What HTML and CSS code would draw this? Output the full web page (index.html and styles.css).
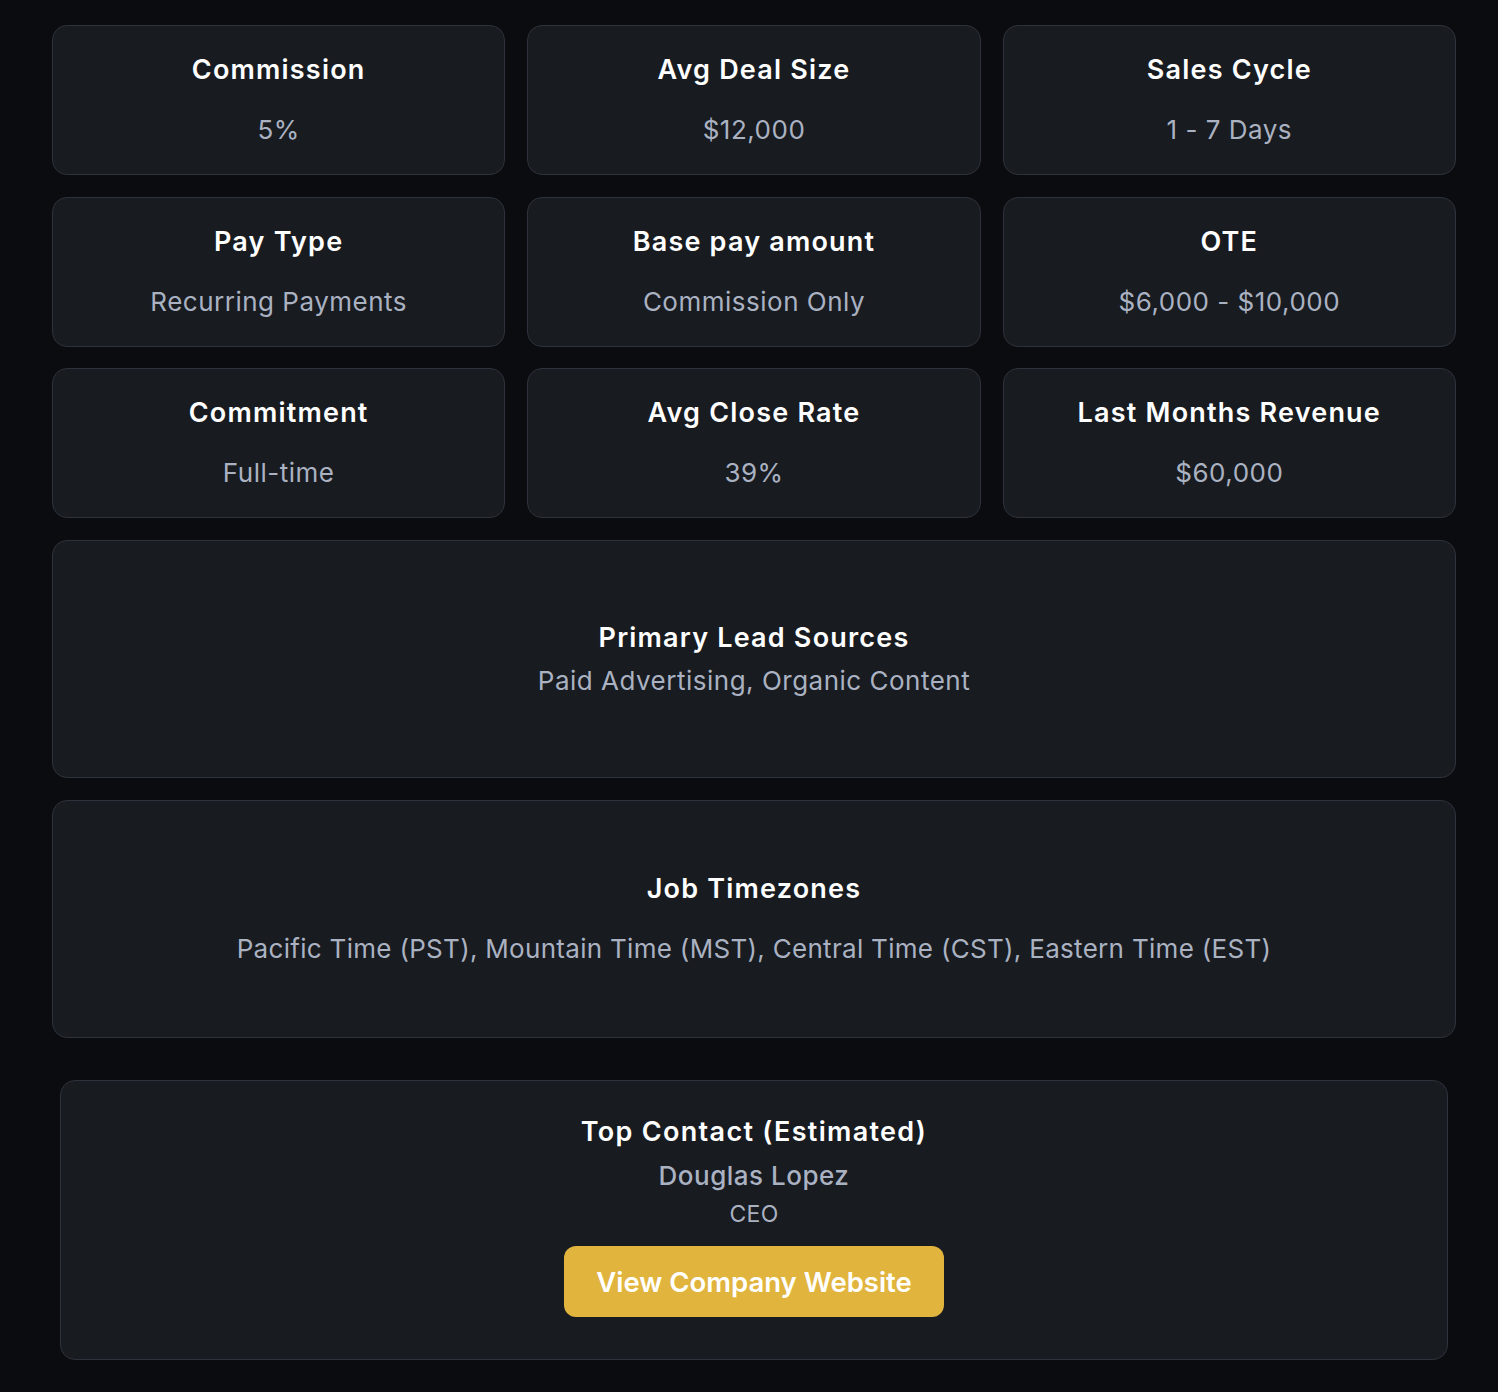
FILE: index.html
```html
<!DOCTYPE html>
<html lang="en">
<head>
<meta charset="utf-8">
<title>Job Details</title>
<link rel="stylesheet" href="styles.css">
</head>
<body>
<main class="page">
  <section class="stats">
    <div class="card stat"><h3 class="title">Commission</h3><p class="value">5%</p></div>
    <div class="card stat"><h3 class="title">Avg Deal Size</h3><p class="value">$12,000</p></div>
    <div class="card stat"><h3 class="title">Sales Cycle</h3><p class="value">1 - 7 Days</p></div>
    <div class="card stat"><h3 class="title">Pay Type</h3><p class="value">Recurring Payments</p></div>
    <div class="card stat"><h3 class="title">Base pay amount</h3><p class="value">Commission Only</p></div>
    <div class="card stat"><h3 class="title">OTE</h3><p class="value">$6,000 - $10,000</p></div>
    <div class="card stat"><h3 class="title">Commitment</h3><p class="value">Full-time</p></div>
    <div class="card stat"><h3 class="title">Avg Close Rate</h3><p class="value">39%</p></div>
    <div class="card stat"><h3 class="title">Last Months Revenue</h3><p class="value">$60,000</p></div>
  </section>
  <section class="card wide leads">
    <h3 class="title">Primary Lead Sources</h3>
    <p class="value">Paid Advertising, Organic Content</p>
  </section>
  <section class="card wide zones">
    <h3 class="title">Job Timezones</h3>
    <p class="value">Pacific Time (PST), Mountain Time (MST), Central Time (CST), Eastern Time (EST)</p>
  </section>
  <section class="card contact">
    <h3 class="title">Top Contact (Estimated)</h3>
    <p class="name">Douglas Lopez</p>
    <p class="role">CEO</p>
    <a class="btn" href="#">View Company Website</a>
  </section>
</main>
</body>
</html>
```

FILE: styles.css
```css
* { box-sizing: border-box; }
html, body { margin: 0; padding: 0; }
body {
  background: #0b0c10;
  font-family: Inter, "Noto Sans", sans-serif;
  color: #ffffff;
}
.page {
  width: 1456px;
  padding: 25px 0 32px 52px;
  display: flex;
  flex-direction: column;
}
.card {
  background: #181b20;
  border: 1.5px solid #2e323c;
  border-radius: 15px;
  display: flex;
  flex-direction: column;
  align-items: center;
  justify-content: center;
  text-align: center;
}
.title {
  margin: 0;
  font-size: 27px;
  line-height: 36px;
  font-weight: 600;
  color: #ffffff;
  letter-spacing: 1.2px;
}
.value {
  margin: 0;
  font-size: 26px;
  line-height: 36px;
  font-weight: 400;
  color: #aab2c2;
  letter-spacing: 0.5px;
}
.stats {
  display: grid;
  grid-template-columns: repeat(3, 1fr);
  column-gap: 22px;
  row-gap: 21.5px;
}
.stat {
  height: 150px;
  gap: 24px;
}
.wide {
  margin-top: 22px;
  height: 238px;
}
.leads { gap: 7px; }
.zones { gap: 24px; }
.zones .value { letter-spacing: 0.3px; }
.contact {
  margin: 42px 8px 0 8px;
  height: 280px;
  justify-content: flex-start;
  padding-top: 33px;
}
.contact .title { letter-spacing: 1.3px; }
.name {
  margin: 8px 0 0 0;
  font-size: 26px;
  line-height: 36px;
  font-weight: 500;
  color: #aab2c2;
  letter-spacing: 0.5px;
}
.role {
  margin: 4px 0 0 0;
  font-size: 23px;
  line-height: 32px;
  font-weight: 400;
  color: #aab2c2;
  letter-spacing: 0.3px;
}
.btn {
  margin-top: 16px;
  width: 380px;
  height: 71px;
  border-radius: 12px;
  background: #e1b43d;
  color: #ffffff;
  text-decoration: none;
  font-family: Inter, sans-serif;
  font-size: 27.5px;
  font-weight: 600;
  display: flex;
  align-items: center;
  justify-content: center;
}
```
